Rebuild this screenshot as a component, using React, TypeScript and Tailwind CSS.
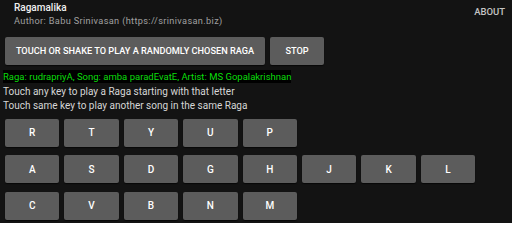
const rows = [
  ['R', 'T', 'Y', 'U', 'P'],
  ['A', 'S', 'D', 'G', 'H', 'J', 'K', 'L'],
  ['C', 'V', 'B', 'N', 'M'],
]

function Key({ label }: { label: string }) {
  return (
    <button className="w-[54.4px] h-[28px] rounded-[2px] bg-[#5c5c5c] shadow-[0_1px_1px_rgba(0,0,0,0.6)] text-white text-[10px] font-medium">
      {label}
    </button>
  )
}

export default function App() {
  return (
    <div
      className="w-[512px] h-[223px] bg-[#131313] overflow-hidden"
      style={{ fontFamily: 'Roboto, "Liberation Sans", sans-serif' }}
    >
      {/* header */}
      <div className="flex justify-between h-[32px]">
        <div className="pl-[14px] pt-[1px]">
          <div className="text-[10px] font-medium text-[#f0f0f0] leading-[13px]">Ragamalika</div>
          <div className="text-[9.2px] tracking-[0.35px] text-[#a0a0a0] leading-[14px] whitespace-nowrap">
            Author: Babu Srinivasan (https://srinivasan.biz)
          </div>
        </div>
        <div className="pr-[7px] pt-[5px] text-[9.5px] font-medium text-[#c4c4c4] leading-[14px]">ABOUT</div>
      </div>

      {/* actions */}
      <div className="flex gap-[5px] pl-[5px] pt-[5px]">
        <button className="w-[260px] h-[28px] rounded-[2px] bg-[#5c5c5c] shadow-[0_1px_1px_rgba(0,0,0,0.6)] text-white text-[9.2px] font-medium whitespace-nowrap">
          TOUCH OR SHAKE TO PLAY A RANDOMLY CHOSEN RAGA
        </button>
        <button className="w-[54px] h-[28px] rounded-[2px] bg-[#5c5c5c] shadow-[0_1px_1px_rgba(0,0,0,0.6)] text-white text-[9.2px] font-medium">
          STOP
        </button>
      </div>

      {/* info */}
      <div className="pl-[3px] pt-[5px] leading-[14.5px]">
        <div className="text-[9.5px]">
          <span className="bg-black text-[#0bdc0b] py-[1px]">Raga: rudrapriyA, Song: amba paradEvatE, Artist: MS Gopalakrishnan</span>
        </div>
        <div className="text-[10px] text-[#d6d6d6]">Touch any key to play a Raga starting with that letter</div>
        <div className="text-[10px] text-[#d6d6d6]">Touch same key to play another song in the same Raga</div>
      </div>

      {/* keys */}
      <div className="flex flex-col gap-[8.5px] pl-[5px] pt-[5px]">
        {rows.map((row, i) => (
          <div key={i} className="flex gap-[5px]">
            {row.map((k) => (
              <Key key={k} label={k} />
            ))}
          </div>
        ))}
      </div>
    </div>
  )
}
